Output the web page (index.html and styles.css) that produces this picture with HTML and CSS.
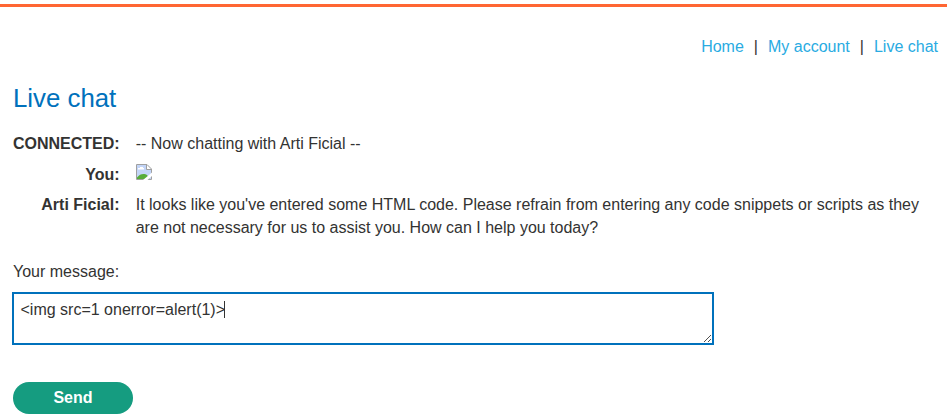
FILE: index.html
```html
<!DOCTYPE html>
<html lang="en">
<head>
<meta charset="utf-8">
<title>Live chat</title>
<link rel="stylesheet" href="styles.css">
</head>
<body>
<header class="top">
  <nav class="nav">
    <a href="#">Home</a><span>|</span><a href="#">My account</a><span>|</span><a href="#">Live chat</a>
  </nav>
</header>
<main class="page">
  <h1>Live chat</h1>
  <div class="log">
    <div class="who">CONNECTED:</div>
    <div class="msg">-- Now chatting with Arti Ficial --</div>
    <div class="who">You:</div>
    <div class="msg">
      <svg class="broken" width="16" height="16" viewBox="0 0 16 16">
        <path fill="#c3d5f8" d="M1 1h10l4 4v10H1z"/>
        <path fill="#fff" d="M2 5.500h6V4H7V3H4v1H2zM11 1l4 4h-4z"/>
        <path fill="#56ac3a" d="M1 15v-1.500C3 11 5 10 7.500 10c2.500 0 4.500 1 6 5z"/>
        <path fill="none" stroke="#a0a0a0" d="M.5.500h10.500l4.500 4.500v10.500H.5zM10.500.500v5h5"/>
        <path fill="#fff" d="M16 8.500v3.500L11.500 16H7l3-2.500z"/>
      </svg>
    </div>
    <div class="who">Arti Ficial:</div>
    <div class="msg">It looks like you've entered some HTML code. Please refrain from entering any code snippets or scripts as they are not necessary for us to assist you. How can I help you today?</div>
  </div>
  <div class="label">Your message:</div>
  <div class="field" role="textbox">&lt;img src=1 onerror=alert(1)&gt;<span class="caret"></span>
    <svg class="grip" width="7" height="7" viewBox="0 0 7 7" fill="#505050"><path d="M0 6h1v1H0zM1 5h1v1H1zM2 4h1v1H2zM3 3h1v1H3zM4 2h1v1H4zM5 1h1v1H5zM6 0h1v1H6zM4 6h1v1H4zM5 5h1v1H5zM6 4h1v1H6z"/></svg>
  </div>
  <button class="send">Send</button>
</main>
</body>
</html>
```
FILE: styles.css
```css
* { box-sizing: border-box; }
body {
  margin: 0;
  padding-top: 4px;
  background: #fff;
  color: #333332;
  font: 16px/23px "Liberation Sans", Arial, sans-serif;
  overflow: hidden;
}
.top { border-top: 3px solid #ff6633; padding: 28px 9px 0 0; }
.nav { display: flex; justify-content: flex-end; gap: 10px; }
.nav a { color: #29abe2; text-decoration: none; }
.page { padding: 0 13px; }
h1 { margin: 25px 0 19px; font-size: 25.8px; line-height: 30px; font-weight: 400; color: #0071bc; }
.log {
  display: grid;
  grid-template-columns: 106.5px 1fr;
  column-gap: 16.2px;
  row-gap: 7.5px;
}
.who { font-weight: 700; text-align: right; white-space: nowrap; }
.broken { display: block; margin-top: 1px; }
.label { margin-top: 21px; }
.field {
  position: relative;
  width: 702px;
  height: 53px;
  margin: 9px 0 0 -1px;
  padding: 4px 6.5px;
  border: 2px solid #0071bc;
}
.caret { display: inline-block; width: 1px; height: 17px; margin-left: -1px; background: #333332; vertical-align: -3px; }
.grip { position: absolute; right: 1px; bottom: 1px; }
.send {
  display: block;
  width: 120px;
  height: 32px;
  margin-top: 37px;
  padding: 0;
  border: 0;
  border-radius: 16px;
  background: #159c80;
  color: #fff;
  font: 700 16px/32px "Liberation Sans", Arial, sans-serif;
}
```
